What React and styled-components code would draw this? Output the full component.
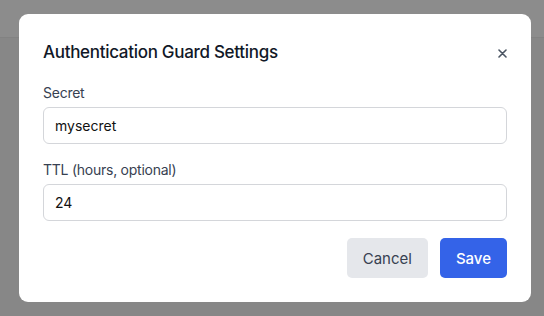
import React from "react";
import styled, { createGlobalStyle } from "styled-components";

const Global = createGlobalStyle`
  html, body { margin: 0; padding: 0; }
  body {
    width: 544px;
    height: 316px;
    overflow: hidden;
    background: #888888;
    font-family: Inter, "Liberation Sans", Arial, sans-serif;
    -webkit-font-smoothing: antialiased;
  }
  * { box-sizing: border-box; }
`;

const Page = styled.div`
  display: flex;
  flex-direction: column;
  height: 316px;
`;

const PageHeader = styled.header`
  height: 38px;
  flex: none;
  background: #8c8c8c;
  border-bottom: 1px solid #828282;
`;

const PageBody = styled.main`
  flex: 1;
  background: #878787;
`;

const Overlay = styled.div`
  position: fixed;
  inset: 0;
  display: flex;
  align-items: center;
  justify-content: center;
  padding-left: 6px;
`;

const Dialog = styled.div`
  width: 512px;
  background: #ffffff;
  border-radius: 9px;
  padding: 24px;
  display: flex;
  flex-direction: column;
`;

const TitleRow = styled.div`
  display: flex;
  align-items: center;
  justify-content: space-between;
  height: 28px;
  margin-bottom: 17px;
`;

const Title = styled.h2`
  margin: 0;
  font-size: 17px;
  font-weight: 500;
  color: #111827;
  letter-spacing: -0.3px;
`;

const CloseButton = styled.button`
  border: none;
  background: transparent;
  padding: 0;
  width: 10px;
  height: 10px;
  display: flex;
  align-items: center;
  justify-content: center;
  color: #4b5563;
  margin-top: 3px;
  cursor: pointer;
`;

const Field = styled.div`
  display: flex;
  flex-direction: column;
  margin-bottom: ${(p) => p.$mb || 16}px;
`;

const Label = styled.label`
  font-size: 14px;
  line-height: 20px;
  color: #374151;
  letter-spacing: -0.25px;
  margin-bottom: 4px;
`;

const Input = styled.input`
  height: 37px;
  width: 100%;
  margin: 0;
  border: 1px solid #d4d6da;
  border-radius: 6px;
  padding: 0 11px;
  font-family: inherit;
  font-size: 14px;
  color: #111111;
  outline: none;
`;

const Actions = styled.div`
  display: flex;
  justify-content: flex-end;
  gap: 12px;
`;

const Button = styled.button`
  height: 40px;
  padding: 0 16px;
  border: none;
  border-radius: 5px;
  font-family: inherit;
  font-size: 15px;
  background: ${(p) => (p.$primary ? "#3463e8" : "#e5e7eb")};
  color: ${(p) => (p.$primary ? "#ffffff" : "#374151")};
  font-weight: ${(p) => (p.$primary ? 500 : 400)};
  cursor: pointer;
`;

export default function App() {
  return (
    <>
      <Global />
      <Page>
        <PageHeader />
        <PageBody />
      </Page>
      <Overlay>
        <Dialog>
          <TitleRow>
            <Title>Authentication Guard Settings</Title>
            <CloseButton aria-label="Close">
              <svg width="9" height="9" viewBox="0 0 9 9">
                <path d="M1 1L8 8M8 1L1 8" stroke="currentColor" strokeWidth="1.6" strokeLinecap="round" />
              </svg>
            </CloseButton>
          </TitleRow>
          <Field>
            <Label>Secret</Label>
            <Input defaultValue="mysecret" />
          </Field>
          <Field $mb={17}>
            <Label>TTL (hours, optional)</Label>
            <Input defaultValue="24" />
          </Field>
          <Actions>
            <Button>Cancel</Button>
            <Button $primary>Save</Button>
          </Actions>
        </Dialog>
      </Overlay>
    </>
  );
}
